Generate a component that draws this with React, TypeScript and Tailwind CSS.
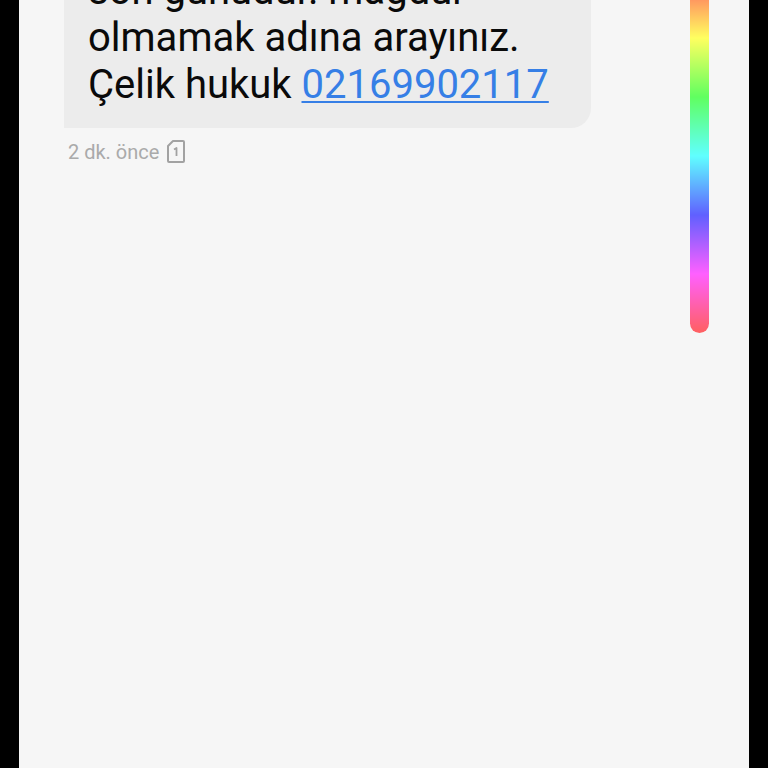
function SimIcon() {
  return (
    <svg
      className="h-6 w-[18px] shrink-0"
      viewBox="0 0 18 24"
      fill="none"
      stroke="#a2a2a2"
      strokeWidth="2"
      strokeLinejoin="round"
      role="img"
      aria-label="SIM 1"
    >
      <path d="M6 1H16Q17 1 17 2V21Q17 22 16 22H2Q1 22 1 21V6Z" />
      <path d="M7 9.500L9.500 8V16" strokeWidth="1.800" />
    </svg>
  );
}

function Message() {
  return (
    <article className="min-w-0 max-w-[527px] flex-1">
      <div className="rounded-tr-[20px] rounded-br-[20px] bg-[#ececec] px-6 pb-5 text-[40px] leading-[47px] text-[#0a0a0a]">
        <p className="whitespace-nowrap">
          son günüdür. mağdur
          <br />
          olmamak adına arayınız.
          <br />
          Çelik hukuk{" "}
          <a
            href="tel:02169902117"
            className="text-[#367fe6] underline decoration-2 underline-offset-[3px] [text-decoration-skip-ink:none]"
          >
            02169902117
          </a>
        </p>
      </div>
      <footer className="mt-3 flex items-center gap-2 pl-1 text-xl leading-6 text-[#aaaaaa]">
        <time>2 dk. önce</time>
        <SimIcon />
      </footer>
    </article>
  );
}

export default function App() {
  return (
    <main
      lang="tr"
      className="h-screen overflow-hidden border-x-[19px] border-black bg-[#f6f6f6] font-[Roboto,'Liberation_Sans',sans-serif]"
    >
      <div className="-mt-[33px] flex items-start justify-between pr-10 pl-[45px]">
        <Message />
        <div className="mt-3 h-[354px] w-[19px] shrink-0 rounded-full bg-[linear-gradient(to_bottom,#ff6060,#ffff60,#60ff60,#60ffff,#6060ff,#ff60ff,#ff6060)]" />
      </div>
    </main>
  );
}
